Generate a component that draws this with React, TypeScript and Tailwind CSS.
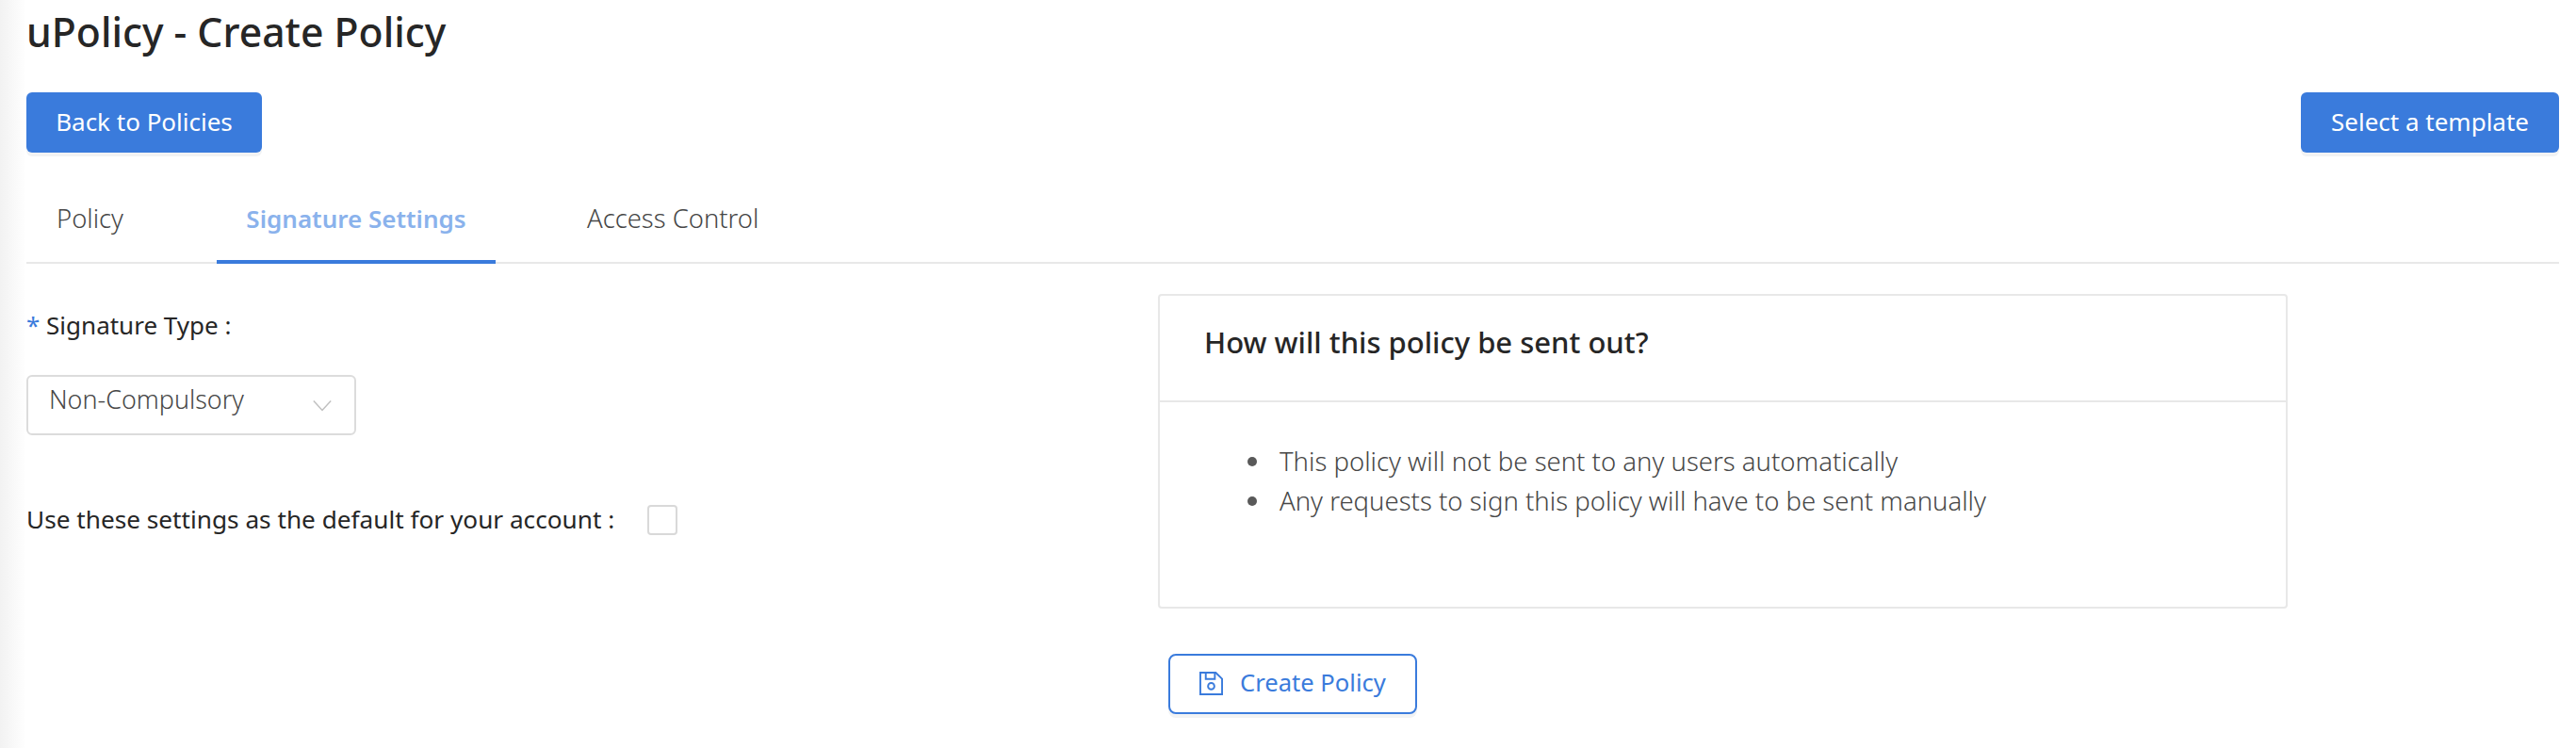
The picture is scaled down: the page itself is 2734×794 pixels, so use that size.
export default function App() {
  const font = { fontFamily: '"Noto Sans", sans-serif' };
  return (
    <div style={font} className="relative h-[794px] w-[2734px] overflow-hidden bg-white pl-[28px] pr-[18px] text-[#262626]">
      <div className="absolute inset-y-0 left-0 w-[28px] bg-gradient-to-r from-[#f2f2f2] to-white" />
      <div className="relative">
        <h1 className="pt-[7px] text-[42.7px] font-medium leading-[54px] text-[#262626]">uPolicy - Create Policy</h1>
        <div className="mt-[37px] flex justify-between">
          <button className="h-[64px] w-[250px] rounded-[6px] bg-[#3a7bdc] pb-[2px] text-[26px] text-white shadow-[0_4px_0_#f2f3f4]">Back to Policies</button>
          <button className="h-[64px] w-[274px] rounded-[6px] bg-[#3a7bdc] pb-[2px] text-[26px] text-white shadow-[0_4px_0_#f2f3f4]">Select a template</button>
        </div>
        <div className="mt-[32px] flex h-[86px] items-start border-b-2 border-[#e8e8e8] text-[27.4px] font-light leading-[36px]">
          <div className="w-[202px] px-[32px] pt-[20px] text-[#474747]">Policy</div>
          <div className="h-[86px] w-[296px] border-b-[4px] border-[#3a7bdc] pt-[20px] text-center text-[26px] font-semibold text-[#8ab2ec]">Signature Settings</div>
          <div className="pl-[97px] pt-[20px] text-[#474747]">Access Control</div>
        </div>
        <div className="mt-[32px] flex">
          <div className="w-[1201px]">
            <div className="pt-[16px] text-[26px] leading-[34px]"><span className="text-[#3a7bdc]">*</span> Signature Type :</div>
            <div className="mt-[36px] flex h-[64px] w-[350px] items-start justify-between rounded-[6px] border-2 border-[#dcdcdc] pl-[22px] pr-[24px] pt-[4px] text-[26.9px] font-light text-[#474747]">
              <span>Non-Compulsory</span>
              <svg viewBox="0 0 24 14" className="mt-[20px] h-[13px] w-[20px]" fill="none" stroke="#bfbfbf" strokeWidth="1.7"><path d="M1 1l11 12L23 1" /></svg>
            </div>
            <div className="mt-[70px] flex items-center text-[26.2px]">
              <span>Use these settings as the default for your account :</span>
              <span className="ml-[35px] h-[32px] w-[32px] rounded-[4px] border-2 border-[#d9d9d9] bg-white" />
            </div>
          </div>
          <div className="h-[334px] w-[1199px] rounded-[4px] border-2 border-[#e8e8e8]">
            <div className="flex h-[113px] items-center border-b-2 border-[#e8e8e8] pb-[12px] pl-[47px] text-[31px] font-medium leading-none text-[#262626]">How will this policy be sent out?</div>
            <ul className="pl-[93px] pt-[42px] text-[27.5px] font-light leading-[42px] text-[#474747]">
              <li className="flex items-center gap-[24px]"><span className="h-[10px] w-[10px] rounded-full bg-[#595959]" />This policy will not be sent to any users automatically</li>
              <li className="flex items-center gap-[24px]"><span className="h-[10px] w-[10px] rounded-full bg-[#595959]" />Any requests to sign this policy will have to be sent manually</li>
            </ul>
          </div>
        </div>
        <div className="mt-[48px] flex justify-center">
          <button className="flex h-[64px] w-[264px] items-center gap-[18px] rounded-[8px] border-2 border-[#3a7bdc] bg-white pb-[2px] pl-[31px] text-[25.6px] text-[#3a7bdc] shadow-[0_4px_0_#f2f3f4]">
            <svg viewBox="0 0 26 26" className="h-[25px] w-[25px]" fill="none" stroke="#3a7bdc" strokeWidth="2"><path d="M1 1h17l7 7v17H1z" /><path d="M7 1v7h10V1" /><circle cx="13" cy="16" r="3.5" /></svg>
            <span>Create Policy</span>
          </button>
        </div>
      </div>
    </div>
  );
}
